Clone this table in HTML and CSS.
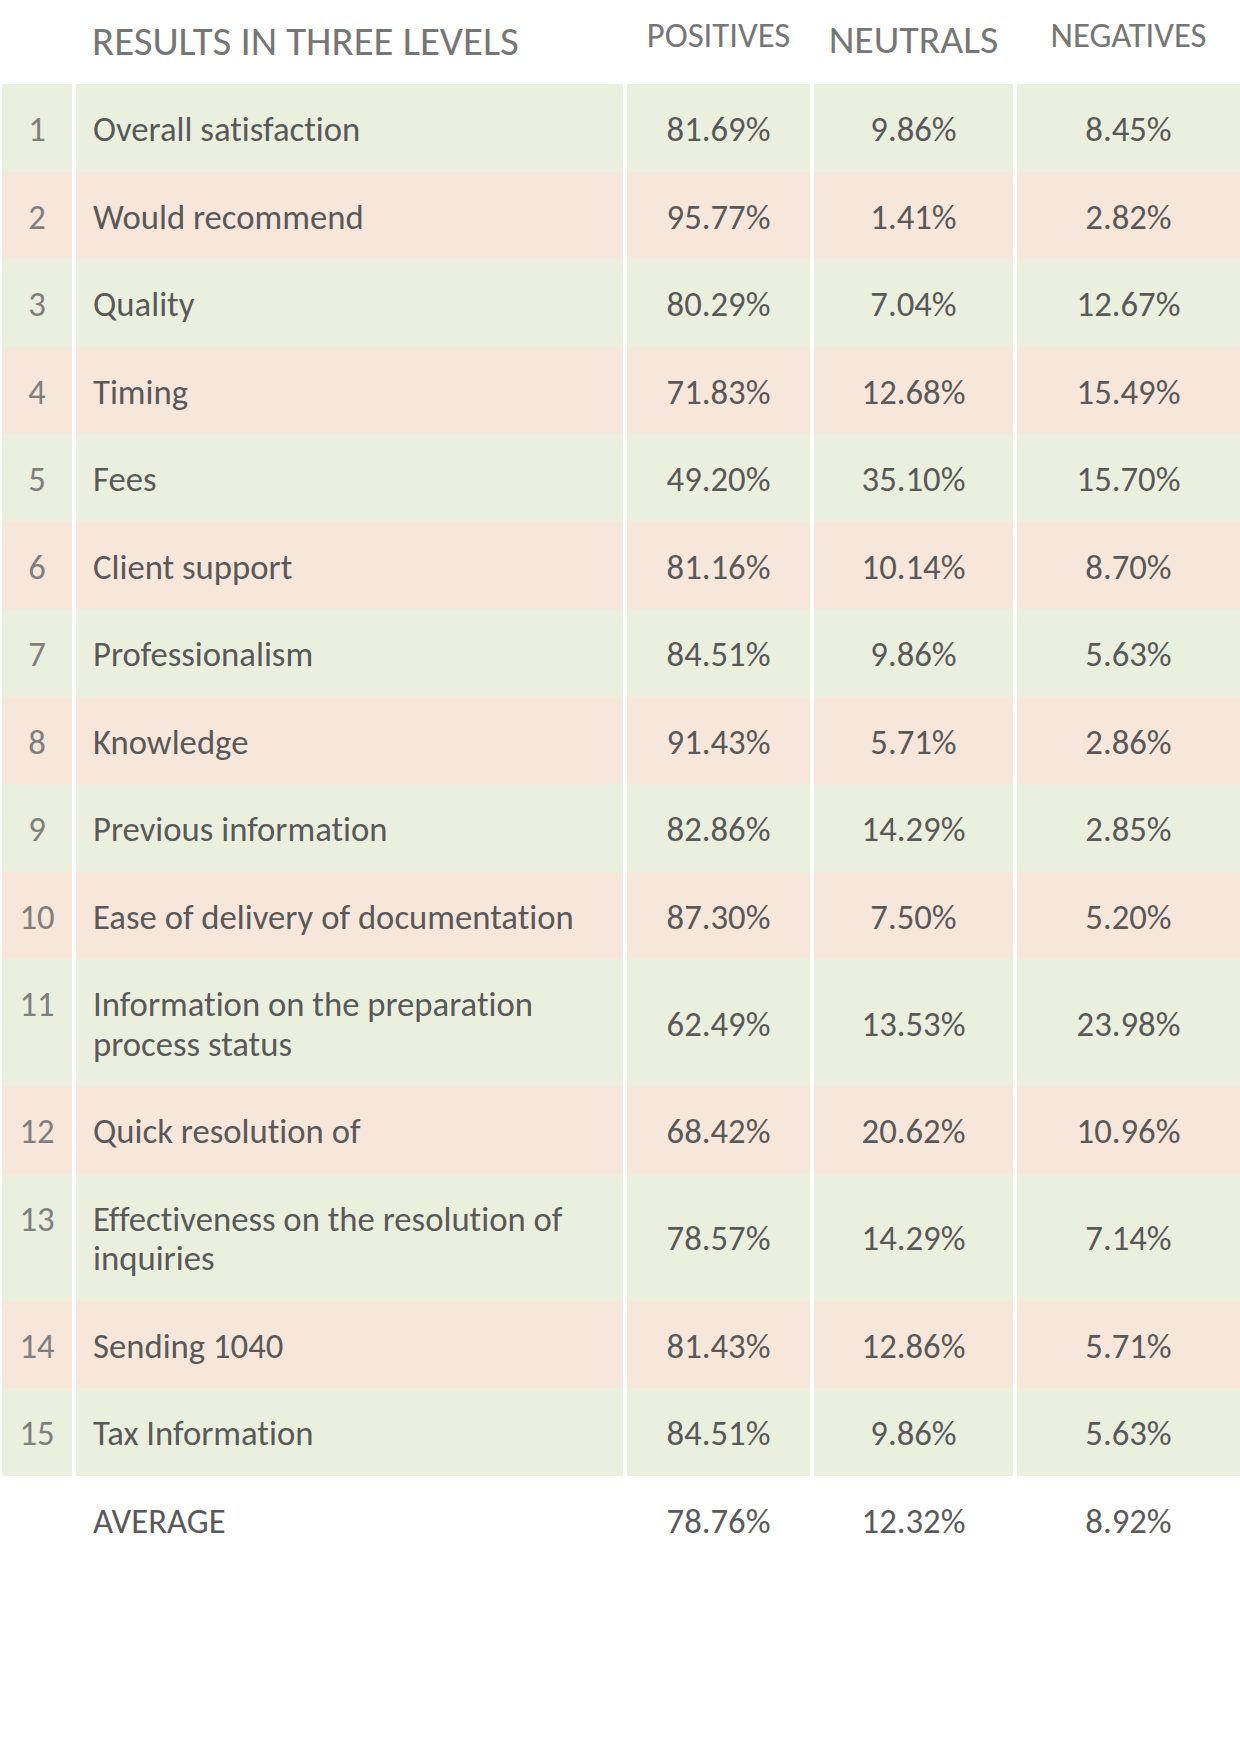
FILE: index.html
```html
<!DOCTYPE html>
<html lang="en">
<head>
<meta charset="utf-8">
<title>Results in three levels</title>
<link rel="stylesheet" href="styles.css">
</head>
<body>
<div class="page">
  <div class="head">
    <div class="h-title">RESULTS IN THREE LEVELS</div>
    <div class="h-col h-pos">POSITIVES</div>
    <div class="h-col h-neu">NEUTRALS</div>
    <div class="h-col h-neg">NEGATIVES</div>
  </div>
  <div class="table">
    <div class="row green"><div class="num">1</div><div class="label">Overall satisfaction</div><div class="val">81.69%</div><div class="val">9.86%</div><div class="val">8.45%</div></div>
    <div class="row peach"><div class="num">2</div><div class="label">Would recommend</div><div class="val">95.77%</div><div class="val">1.41%</div><div class="val">2.82%</div></div>
    <div class="row green"><div class="num">3</div><div class="label">Quality</div><div class="val">80.29%</div><div class="val">7.04%</div><div class="val">12.67%</div></div>
    <div class="row peach"><div class="num">4</div><div class="label">Timing</div><div class="val">71.83%</div><div class="val">12.68%</div><div class="val">15.49%</div></div>
    <div class="row green"><div class="num">5</div><div class="label">Fees</div><div class="val">49.20%</div><div class="val">35.10%</div><div class="val">15.70%</div></div>
    <div class="row peach"><div class="num">6</div><div class="label">Client support</div><div class="val">81.16%</div><div class="val">10.14%</div><div class="val">8.70%</div></div>
    <div class="row green"><div class="num">7</div><div class="label">Professionalism</div><div class="val">84.51%</div><div class="val">9.86%</div><div class="val">5.63%</div></div>
    <div class="row peach"><div class="num">8</div><div class="label">Knowledge</div><div class="val">91.43%</div><div class="val">5.71%</div><div class="val">2.86%</div></div>
    <div class="row green"><div class="num">9</div><div class="label">Previous information</div><div class="val">82.86%</div><div class="val">14.29%</div><div class="val">2.85%</div></div>
    <div class="row peach"><div class="num">10</div><div class="label">Ease of delivery of documentation</div><div class="val">87.30%</div><div class="val">7.50%</div><div class="val">5.20%</div></div>
    <div class="row green"><div class="num">11</div><div class="label">Information on the preparation<br>process status</div><div class="val">62.49%</div><div class="val">13.53%</div><div class="val">23.98%</div></div>
    <div class="row peach"><div class="num">12</div><div class="label">Quick resolution of</div><div class="val">68.42%</div><div class="val">20.62%</div><div class="val">10.96%</div></div>
    <div class="row green"><div class="num">13</div><div class="label">Effectiveness on the resolution of<br>inquiries</div><div class="val">78.57%</div><div class="val">14.29%</div><div class="val">7.14%</div></div>
    <div class="row peach"><div class="num">14</div><div class="label">Sending 1040</div><div class="val">81.43%</div><div class="val">12.86%</div><div class="val">5.71%</div></div>
    <div class="row green"><div class="num">15</div><div class="label">Tax Information</div><div class="val">84.51%</div><div class="val">9.86%</div><div class="val">5.63%</div></div>
    <div class="row avg"><div class="num"></div><div class="label">AVERAGE</div><div class="val">78.76%</div><div class="val">12.32%</div><div class="val">8.92%</div></div>
  </div>
</div>
</body>
</html>
```
FILE: styles.css
```css
html, body {
  margin: 0;
  padding: 0;
  background: #ffffff;
}
body {
  font-family: Carlito, Lato, "Open Sans", "Liberation Sans", sans-serif;
  font-variant-ligatures: none;
  color: #595959;
  width: 1240px;
  height: 1754px;
  overflow: hidden;
}
.page {
  padding-left: 2px;
}
.head,
.row {
  display: grid;
  grid-template-columns: 70px 547px 183px 199px 223px;
  column-gap: 4px;
}
.head {
  height: 84px;
  color: #767676;
}
.h-title {
  grid-column: 2;
  font-size: 40.8px;
  line-height: 40px;
  padding: 21px 0 0 16px;
  white-space: nowrap;
}
.h-col {
  text-align: center;
  line-height: 1;
  white-space: nowrap;
}
.h-pos, .h-neg {
  font-size: 34.7px;
  padding-top: 18px;
}
.h-pos { grid-column: 3; }
.h-neu {
  grid-column: 4;
  font-size: 39.8px;
  padding-top: 20px;
}
.h-neg { grid-column: 5; }
.row {
  font-size: 34.7px;
  line-height: 39.5px;
}
.row > div {
  padding: 26px 0 22px;
}
.green > div { background: #ebf0de; }
.peach > div { background: #f6e7da; }
.avg > div { background: transparent; }
.num {
  text-align: center;
  color: #7f7f7f;
}
.label {
  padding-left: 17px !important;
  white-space: nowrap;
}
.val {
  display: flex;
  align-items: center;
  justify-content: center;
}
```
